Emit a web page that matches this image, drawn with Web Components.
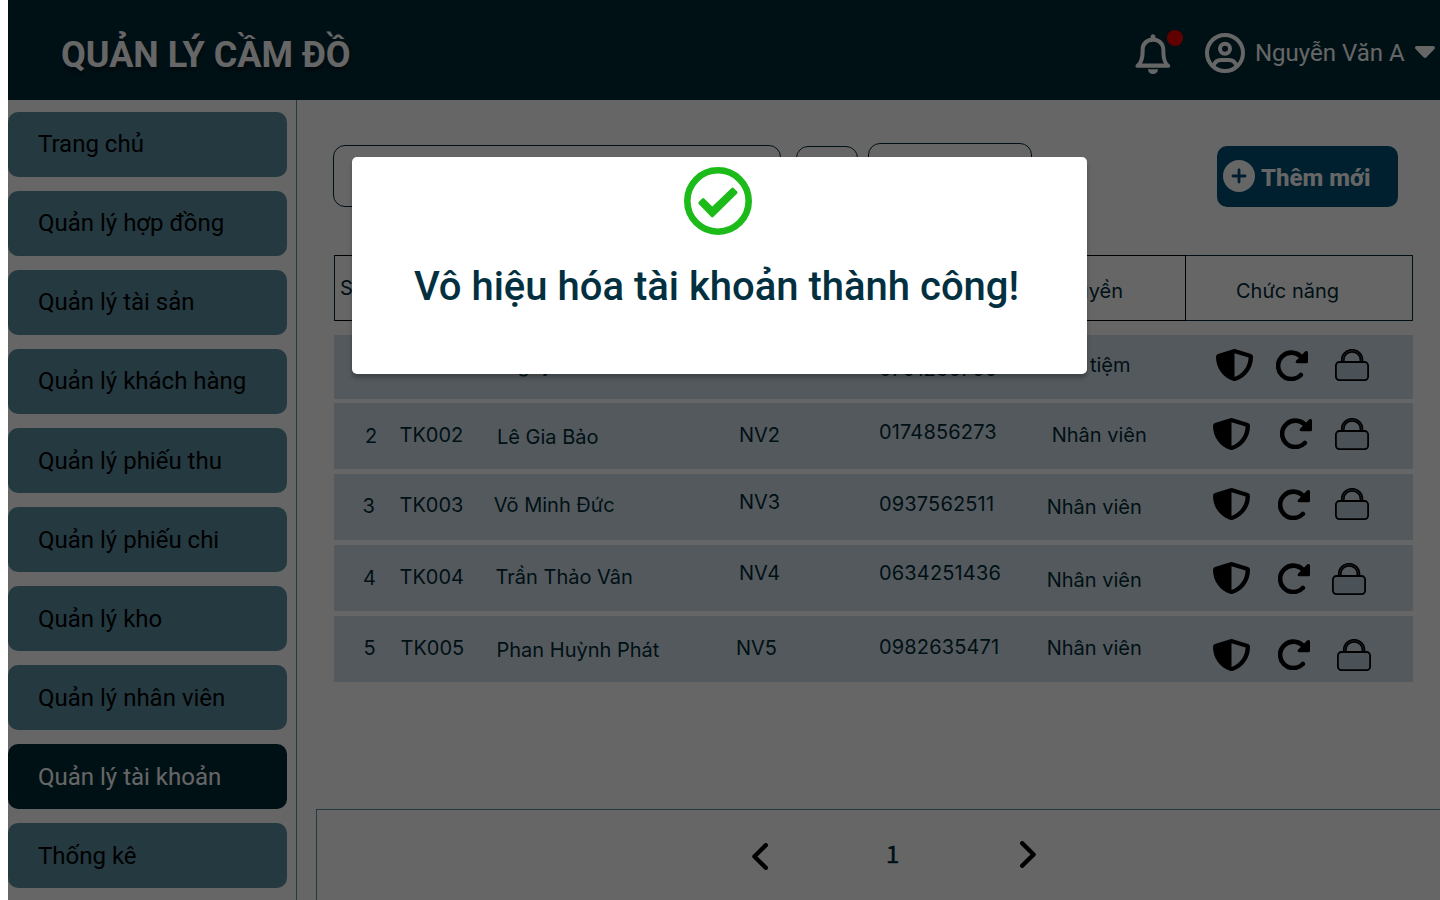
<!DOCTYPE html>
<html lang="vi">
<head>
<meta charset="utf-8">
<title>Quản lý cầm đồ</title>
<style>
  html, body { margin: 0; height: 100%; overflow: hidden; background: #fff; }
  body { font-family: Roboto, "Liberation Sans", sans-serif; }
</style>
</head>
<body>
<pawn-app></pawn-app>
<script>
const define = (name, html, setup) => {
  const tpl = document.createElement('template');
  tpl.innerHTML = html;
  customElements.define(name, class extends HTMLElement {
    constructor() {
      super();
      this.attachShadow({ mode: 'open' }).append(tpl.content.cloneNode(true));
    }
    connectedCallback() { if (setup) setup(this, this.shadowRoot); }
  });
};

const ICONS = {
  bell: `<svg width="36" height="40" viewBox="0 0 36 40"><path d="M18 .3c1.4 0 2.4 1 2.4 2.3v1.2c5.8 1 9.9 5.6 9.9 11.6 0 9 1.300 12.600 4.300 15.100 1.300 1.200.6 3.200-1.200 3.200H2.300C.5 33.700-.2 31.700 1.100 30.500 4.100 28 5.600 24.400 5.600 15.400c0-6 4.100-10.600 10-11.600V2.600C15.600 1.300 16.600.3 18 .3Zm0 7.500c-4.700 0-8.300 3.300-8.300 8 0 7.100-.9 11-2.900 13.800h22.400c-2-2.800-2.800-6.700-2.800-13.800 0-4.700-3.700-8-8.400-8Z" fill="#fff" fill-rule="evenodd"/><path d="M13 35.200h10a5 4.900 0 0 1-10 0Z" fill="#fff"/></svg>`,
  user: `<svg width="40" height="40" viewBox="0 0 40 40" fill="none" stroke="#fff" stroke-width="4"><circle cx="20" cy="20" r="18"/><circle cx="20" cy="15.700" r="5"/><path d="M8.500 33c1.200-4 4-6 7.500-6h8c3.500 0 6.300 2 7.500 6"/></svg>`,
  caret: `<svg width="20" height="13" viewBox="0 0 20 13"><path d="M2 0h16c1.900 0 2.600 1.900 1.400 3.100l-7.900 8.200c-.9.900-2.100.9-3 0L.6 3.100C-.6 1.900.1 0 2 0Z" fill="#fff"/></svg>`,
  plus: `<svg width="32" height="32" viewBox="0 0 32 32"><circle cx="16" cy="16" r="16" fill="#fff"/><path d="M16 10v12M10 16h12" stroke="#005075" stroke-width="2.800" stroke-linecap="round"/></svg>`,
  shield: `<svg width="37" height="32" viewBox="0 0 37 32"><path d="M17.300.3Q18.500-.2 19.700.3L35 5.100Q37 5.800 37 7.900C37 19 30 28.200 20 31.700Q18.500 32.200 17 31.700C7 28.200 0 19 0 7.900Q0 5.800 2 5.100ZM18.500 4.300V27.900C26.500 25.300 32.400 17.500 32.600 8.500Z" fill="#000" fill-rule="evenodd"/></svg>`,
  redo: `<svg width="32" height="31" viewBox="0 0 32 31"><path d="M24.800 25a13.200 13.200 0 1 1 .2-18.200" fill="none" stroke="#000" stroke-width="4.600" stroke-linecap="round"/><path d="M29.300 1.300Q32 .2 32 2.500V11.800Q32 13.300 30.500 13.300H21.200Q18.600 13 20.300 10.500Z" fill="#000"/></svg>`,
  lock: `<svg width="34" height="32" viewBox="0 0 34 32"><path d="M7.800 13V10.500a9.300 8.700 0 0 1 18.600 0V13" fill="none" stroke="#000" stroke-width="3.800"/><path d="M7.800 13V10.500a9.300 8.700 0 0 1 18.600 0V13" fill="none" stroke="#65707a" stroke-width=".7"/><rect x=".9" y="13" width="32.200" height="18.100" rx="3.500" fill="#b9cbd9" stroke="#000" stroke-width="1.800"/></svg>`,
  prev: `<svg width="16" height="27" viewBox="0 0 16 27"><path d="M13.800 2.200 2.400 13.500 13.800 24.800" fill="none" stroke="#000" stroke-width="4.400" stroke-linecap="round" stroke-linejoin="round"/></svg>`,
  next: `<svg width="16" height="27" viewBox="0 0 16 27"><path d="M2.200 2.200l11.400 11.300L2.200 24.800" fill="none" stroke="#000" stroke-width="4.400" stroke-linecap="round" stroke-linejoin="round"/></svg>`,
  check: `<svg width="68" height="68" viewBox="0 0 68 68"><circle cx="34" cy="34" r="30.700" fill="none" stroke="#1cbb1a" stroke-width="6.600"/><path d="M14.700 34.900 18.200 31.400Q19.200 30.700 20.200 31.400L28.300 39.600 47.600 21Q48.600 20.200 49.600 21L53.200 24.500Q54.100 25.500 53.200 26.500L29.300 50Q28.300 50.900 27.300 50L14.700 36.900Q13.900 35.900 14.700 34.900Z" fill="#1cbb1a"/></svg>`
};

define('ui-icon', `<style>:host{display:block;flex:none;line-height:0}svg{display:block}div{display:block}</style><div></div>`,
  (el, root) => { root.querySelector('div').innerHTML = ICONS[el.getAttribute('name')]; });

define('app-header', `<style>
  :host{display:flex;height:100px;background:#002b38;color:#fff;box-sizing:border-box;padding-left:53px}
  h1{margin:33px 0 0;font:700 36px/44px Roboto,sans-serif;text-shadow:0 4px 4px rgba(0,0,0,.45);white-space:nowrap;flex:1}
  .bell{position:relative;margin:34px 34.500px 0 0}
  .dot{position:absolute;left:32.500px;top:-4px;width:16px;height:16px;border-radius:50%;background:#f00000}
  .user{margin:33px 10px 0 0}
  .name{font-size:24px;line-height:28px;margin-top:39px;white-space:nowrap;width:150px}
  .caret{margin:46px 5px 0 10px}
</style>
<h1>QUẢN LÝ CẦM ĐỒ</h1>
<div class="bell"><ui-icon name="bell"></ui-icon><span class="dot"></span></div>
<ui-icon class="user" name="user"></ui-icon>
<span class="name">Nguyễn Văn A</span>
<ui-icon class="caret" name="caret"></ui-icon>`);

define('nav-item', `<style>
  :host{display:flex;align-items:center;height:65px;box-sizing:border-box;padding-left:30px;border-radius:10px;
    background:#5c8fa1;color:#000;font-size:24px;line-height:28px}
  :host(:nth-child(-n+4)){padding-bottom:2px}
  :host([active]){background:#002b38;color:#fff}
</style><slot></slot>`);

define('side-nav', `<style>
  :host{display:grid;grid-auto-rows:65px;row-gap:14px;align-content:start;width:289px;box-sizing:border-box;padding:12px 9px 0 0;border-right:1px solid #5c8fa1}
</style><slot></slot>`);

define('tool-bar', `<style>
  :host{display:flex;padding:43px 42px 0 36px;height:112px;box-sizing:border-box;align-items:flex-start}
  .f{box-sizing:border-box;border:1px solid #002b38;border-radius:12px}
  .a{width:448px;height:62px;margin:2px 15px 0 0}
  .b{width:62px;height:60px;margin:3px 10px 0 0}
  .c{width:164px;height:62px;margin-right:auto}
  .add{display:flex;align-items:center;box-sizing:border-box;width:181px;height:61px;margin-top:3px;padding-left:6px;gap:6px;
    border-radius:10px;background:#005075;color:#fff;font:800 24px/28px Roboto,sans-serif}
  .add ui-icon{margin-bottom:1px}
  .add span{padding-top:2px;white-space:nowrap}
</style>
<div class="f a"></div><div class="f b"></div><div class="f c"></div>
<div class="add"><ui-icon name="plus"></ui-icon><span>Thêm mới</span></div>`);

define('table-head', `<style>
  :host{display:flex;height:66px;color:#002b38;font:400 20px/24px Inter,sans-serif}
  div{box-sizing:border-box;border:1px solid #002b38;white-space:nowrap}
  .l{width:852px;border-color:#000;border-left-color:#002b38;display:flex;justify-content:space-between;padding:20px 62px 0 5px}
  .l span+span{padding-top:3px}
  .r{flex:1;border-left:0;padding:23px 0 0 50px}
</style><div class="l"><span>STT</span><span>Quyền</span></div><div class="r">Chức năng</div>`);

/* Every cell carries its own left / top inset, as "x,y" inside the cell. */
define('account-row', `<style>
  :host{display:grid;grid-template-columns:60px 90px 240px 140px 170px 180px 1fr;background:#d2dfe8;color:#002b38;
    font:400 20px/24px Inter,sans-serif}
  span,.icons{white-space:nowrap;box-sizing:border-box}
  span:nth-of-type(5){letter-spacing:.15px}
  .icons{display:flex;align-items:flex-start}
</style>`, (el, root) => {
  const d = JSON.parse(el.dataset.row);
  d.cells.forEach(([t, x, y]) => {
    const s = document.createElement('span');
    s.textContent = t;
    s.style.padding = `${y}px 0 0 ${x}px`;
    root.append(s);
  });
  const box = document.createElement('div');
  box.className = 'icons';
  ['shield', 'redo', 'lock'].forEach((n, i) => {
    const ic = document.createElement('ui-icon');
    ic.setAttribute('name', n);
    ic.style.margin = `${d.icons[i][1]}px 0 0 ${d.icons[i][0]}px`;
    box.append(ic);
  });
  root.append(box);
});

const ROWS = [
  { cells: [['1',31,18],['TK001',6,18],['Nguyễn Văn A',18.500,18],['NV1',15,18],['0701230700',15,22],['Chủ tiệm',12,18]], icons: [[2,14],[23,15],[27,14]] },
  { cells: [['2',31,21],['TK002',5.500,20],['Lê Gia Bảo',13,22],['NV2',15,20],['0174856273',15,17],['Nhân viên',17.700,20]], icons: [[-1,15],[30,15],[23,15]] },
  { cells: [['3',28.500,20],['TK003',5.500,19],['Võ Minh Đức',9.700,19],['NV3',15,16],['0937562511',15,18],['Nhân viên',12.700,21]], icons: [[-1,14],[28,15],[25,14]] },
  { cells: [['4',29,21],['TK004',5.500,20],['Trần Thảo Vân',11.500,20],['NV4',15,16],['0634251436',15,16],['Nhân viên',12.700,23]], icons: [[-1,17],[28,18],[22,18]] },
  { cells: [['5',29.500,20],['TK005',6.500,20],['Phan Huỳnh Phát',12.500,22],['NV5',12,20],['0982635471',15,19],['Nhân viên',12.700,20]], icons: [[-1,23],[28,23],[27,23]] }
];

define('account-table', `<style>
  :host{display:block;margin:43px 27px 0 37px}
  .rows{display:grid;grid-template-rows:64px 66px 66px 66px 66px;row-gap:5px;margin-top:14px}
</style><table-head></table-head><div class="rows"></div>`, (el, root) => {
  const rows = root.querySelector('.rows');
  ROWS.forEach((r, i) => {
    const row = document.createElement('account-row');
    row.dataset.row = JSON.stringify(r);
    if (i) row.style.margin = '-1px 0 1px';
    rows.append(row);
  });
});

define('page-bar', `<style>
  :host{display:flex;height:91px;box-sizing:border-box;margin:auto 0 0 19px;border:1px solid #5c8fa1;border-right:0;border-bottom:0;padding-left:435px}
  .p{margin-top:33px}
  .n{margin:29px 0 0 118px;width:14px;color:#002b38;font:400 24px/28px "Noto Sans CJK SC",sans-serif;-webkit-text-stroke:.6px #002b38}
  .x{margin:31px 0 0 120px}
</style><ui-icon class="p" name="prev"></ui-icon><span class="n">1</span><ui-icon class="x" name="next"></ui-icon>`);

define('success-dialog', `<style>
  :host{display:flex;flex-direction:column;align-items:center;width:735px;height:216.500px;box-sizing:border-box;background:#fff;
    border-radius:5px;box-shadow:0 4px 4px rgba(0,0,0,.25);color:#023040;padding-top:10px}
  p{margin:28px 6px 0 0;font:500 40px/47px Roboto,sans-serif;white-space:nowrap}
  ui-icon{margin-right:3px}
</style><ui-icon name="check"></ui-icon><p><slot></slot></p>`);

define('pawn-app', `<style>
  :host{display:flex;flex-direction:column;position:relative;height:100vh;margin-left:8px;overflow:hidden;background:#fff}
  .body{display:flex;flex:1;min-height:0}
  main{flex:1;display:flex;flex-direction:column;min-width:0}
  .overlay{position:absolute;inset:0;background:rgba(0,0,0,.6)}
  success-dialog{position:absolute;left:344px;top:157px}
</style>
<app-header></app-header>
<div class="body">
  <side-nav>
    <nav-item>Trang chủ</nav-item><nav-item>Quản lý hợp đồng</nav-item><nav-item>Quản lý tài sản</nav-item>
    <nav-item>Quản lý khách hàng</nav-item><nav-item>Quản lý phiếu thu</nav-item><nav-item>Quản lý phiếu chi</nav-item>
    <nav-item>Quản lý kho</nav-item><nav-item>Quản lý nhân viên</nav-item><nav-item active>Quản lý tài khoản</nav-item>
    <nav-item>Thống kê</nav-item>
  </side-nav>
  <main><tool-bar></tool-bar><account-table></account-table><page-bar></page-bar></main>
</div>
<div class="overlay"></div>
<success-dialog>Vô hiệu hóa tài khoản thành công!</success-dialog>`);
</script>
</body>
</html>
